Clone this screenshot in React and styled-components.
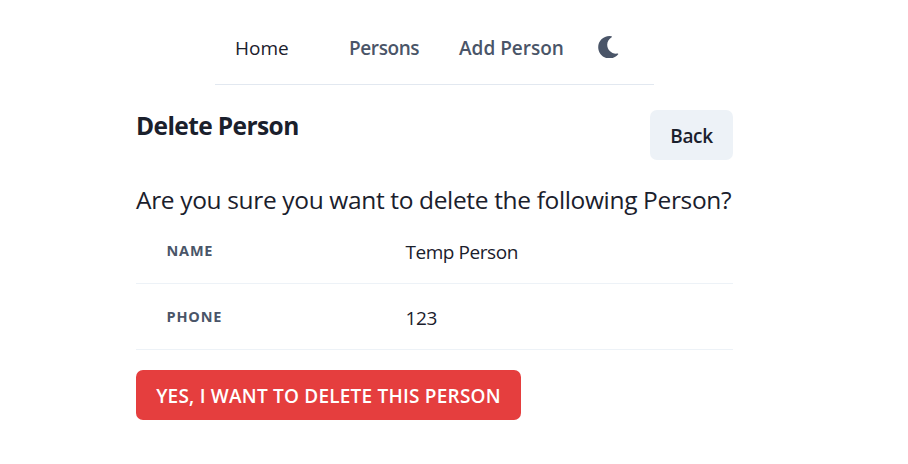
import React from "react";
import styled, { createGlobalStyle } from "styled-components";
import { FaMoon } from "react-icons/fa";

const GlobalStyle = createGlobalStyle`
  * { box-sizing: border-box; }
  body {
    margin: 0;
    background: #fff;
    color: #1a202c;
    font-family: "Open Sans", "Noto Sans", sans-serif;
    font-size: 19px;
  }
`;

const Page = styled.div`
  width: 597px;
  margin-left: 136px;
`;

const Nav = styled.nav`
  display: flex;
  align-items: center;
  width: 439px;
  height: 85px;
  margin-left: 79px;
  padding: 12px 33px 0 20px;
  border-bottom: 1px solid #e2e8f0;
`;

const NavLink = styled.a`
  flex: none;
  width: ${(p) => p.$width}px;
  color: ${(p) => (p.$plain ? "#1a202c" : "#4a5568")};
  font-weight: ${(p) => (p.$plain ? 400 : 600)};
  letter-spacing: ${(p) => p.$tracking || 0}px;
  line-height: 30px;
  white-space: nowrap;
`;

const ThemeToggle = styled.button`
  display: flex;
  padding: 0;
  margin-top: -2px;
  border: 0;
  background: none;
  color: #4a5568;
`;

const Header = styled.header`
  display: flex;
  justify-content: space-between;
  align-items: flex-start;
  height: 75px;
  padding-top: 25px;
`;

const Title = styled.h1`
  margin: 0;
  font-size: 24.5px;
  line-height: 32px;
  font-weight: 700;
  letter-spacing: -0.6px;
  white-space: nowrap;
`;

const BackButton = styled.button`
  width: 83px;
  height: 50px;
  padding: 2px 0 0;
  border: 0;
  border-radius: 7px;
  background: #edf2f7;
  color: #1a202c;
  font: 600 19px "Open Sans", sans-serif;
  letter-spacing: -0.4px;
`;

const Question = styled.p`
  margin: 21px 0 0;
  font-size: 24.5px;
  line-height: 37px;
  letter-spacing: -0.35px;
  white-space: nowrap;
`;

const Details = styled.dl`
  margin: 0;
`;

const DetailRow = styled.div`
  display: grid;
  grid-template-columns: 239px 1fr;
  align-items: center;
  height: 66px;
  padding-left: 30.5px;
  border-bottom: 1px solid #edf2f7;
`;

const Term = styled.dt`
  padding-bottom: 1px;
  color: #4a5568;
  font-size: 14.5px;
  font-weight: 700;
  letter-spacing: 0.8px;
`;

const Value = styled.dd`
  margin: 0;
  padding-top: 2px;
  letter-spacing: ${(p) => p.$tracking || 0}px;
`;

const DangerButton = styled.button`
  width: 385px;
  height: 50px;
  margin-top: 20px;
  padding: 2px 0 0;
  border: 0;
  border-radius: 7px;
  background: #e53e3e;
  color: #fff;
  font: 600 19px "Open Sans", sans-serif;
  letter-spacing: 0.22px;
  white-space: nowrap;
`;

export default function App() {
  return (
    <>
      <GlobalStyle />
      <Page>
        <Nav>
          <NavLink $plain $width={114}>Home</NavLink>
          <NavLink $width={110} $tracking={-0.4}>Persons</NavLink>
          <NavLink $width={138}>Add Person</NavLink>
          <ThemeToggle aria-label="Toggle theme">
            <FaMoon size={22.5} />
          </ThemeToggle>
        </Nav>
        <Header>
          <Title>Delete Person</Title>
          <BackButton>Back</BackButton>
        </Header>
        <Question>Are you sure you want to delete the following Person?</Question>
        <Details>
          <DetailRow><Term>NAME</Term><Value $tracking={-0.45}>Temp Person</Value></DetailRow>
          <DetailRow><Term>PHONE</Term><Value $tracking={-0.4}>123</Value></DetailRow>
        </Details>
        <DangerButton>YES, I WANT TO DELETE THIS PERSON</DangerButton>
      </Page>
    </>
  );
}
